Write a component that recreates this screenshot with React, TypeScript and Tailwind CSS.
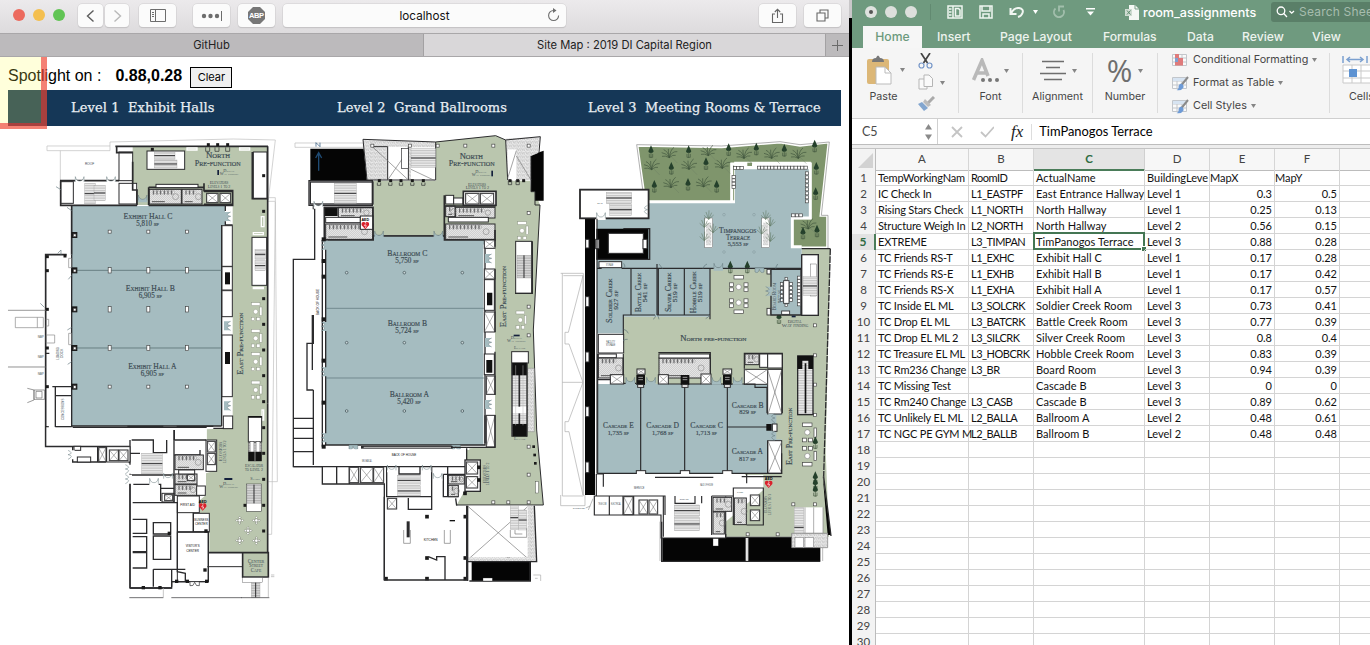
import React from "react";

const BLUE = "#a5bcc0";
const GREEN = "#bac6ae";
const INK = "#2b2b2d";

type Pt = [number, number];
type Box = [number, number, number, number];

/* ---------- floor plan primitives ---------- */

function Label({ x, y, s = 20, w, children, r, sans, fill = "#3b4a52" }: { x: number; y: number; s?: number; w?: number; children: string; r?: boolean; sans?: boolean; fill?: string }) {
  return (
    <text
      x={x}
      y={y}
      fontSize={sans ? s : s * 1.14}
      fill={fill}
      textAnchor="middle"
      textLength={w}
      lengthAdjust="spacingAndGlyphs"
      transform={r ? `rotate(-90 ${x} ${y})` : undefined}
      stroke={fill}
      strokeWidth={s > 14 ? 0.5 : 0}
      className={sans ? "font-['Liberation_Sans']" : "font-['Liberation_Serif'] [font-variant:small-caps]"}
    >
      {children}
    </text>
  );
}

const Wall = ({ d, w = 4, c = INK }: { d: string; w?: number; c?: string }) => <path d={d} fill="none" stroke={c} strokeWidth={w} />;
const Thin = ({ d, c = "#9a9a9a", w = 2 }: { d: string; c?: string; w?: number }) => <path d={d} fill="none" stroke={c} strokeWidth={w} />;

function Rects({ list, fill = "#fff", stroke = INK, w = 3 }: { list: Box[]; fill?: string; stroke?: string; w?: number }) {
  return (
    <>
      {list.map(([x, y, a, b], i) => (
        <rect key={i} x={x} y={y} width={a} height={b} fill={fill} stroke={stroke} strokeWidth={w} />
      ))}
    </>
  );
}

function Shafts({ list }: { list: Box[] }) {
  return (
    <>
      {list.map(([x, y, w, h], i) => (
        <g key={i}>
          <rect x={x} y={y} width={w} height={h} fill="#fff" stroke={INK} strokeWidth={3} />
          <path d={`M${x} ${y}l${w} ${h}M${x + w} ${y}l${-w} ${h}`} stroke="#666" strokeWidth={1.5} />
        </g>
      ))}
    </>
  );
}

function Posts({ pts, w = 9, h = 9 }: { pts: Pt[]; w?: number; h?: number }) {
  return (
    <>
      {pts.map(([x, y], i) => (
        <rect key={i} x={x - w / 2} y={y - h / 2} width={w} height={h} fill="#fff" stroke="#444" strokeWidth={2} />
      ))}
    </>
  );
}

function Blocks({ pts, s = 11 }: { pts: Pt[]; s?: number }) {
  return (
    <>
      {pts.map(([x, y], i) => (
        <rect key={i} x={x - s / 2} y={y - s / 2} width={s} height={s} fill="#1a1a1a" />
      ))}
    </>
  );
}

function DoorsV({ pts, fill = BLUE, k = 1 }: { pts: Pt[]; fill?: string; k?: number }) {
  return (
    <>
      {pts.map(([x, y], i) => (
        <g key={i} transform={`translate(${x} ${y}) scale(${k} 1)`}>
          <path d="M-12 -14L-12 13L8 13Q0 10 -2 4Q-2 1 8 -1Q-2 -3 -2 -6Q0 -11 8 -14Z" fill={fill} />
          <path d="M8 -14Q0 -11 -2 -6Q-2 -3 8 -1Q-2 1 -2 4Q0 10 8 13" fill="none" stroke="#64777c" strokeWidth={1.5} />
        </g>
      ))}
    </>
  );
}

function DoorsH({ pts, fill = BLUE }: { pts: Pt[]; fill?: string }) {
  return (
    <>
      {pts.map(([x, y], i) => (
        <g key={i}>
          <path d={`M${x - 14} ${y + 12}v-22q3 13 14 13q11 0 14-13v22z`} fill={fill} />
          <path d={`M${x - 13} ${y + 6}v-16q3 13 13 13q10 0 13-13v16`} fill="none" stroke="#64777c" strokeWidth={1.5} />
        </g>
      ))}
    </>
  );
}

function Stairs({ list, v }: { list: Box[]; v?: boolean }) {
  return (
    <>
      {list.map(([x, y, w, h], i) => (
        <g key={i}>
          <rect x={x} y={y} width={w} height={h} fill={v ? "url(#treadV)" : "url(#treadH)"} stroke="#999" strokeWidth={1} />
          <path d={v ? `M${x + w / 2} ${y}v${h}` : `M${x} ${y + h / 2}h${w}`} stroke={INK} strokeWidth={3} />
        </g>
      ))}
    </>
  );
}

function Restrooms({ list }: { list: Box[] }) {
  return (
    <>
      {list.map(([x, y, w, h], i) => {
        const n = Math.floor((w * 0.7) / 11);
        return (
          <g key={i}>
            <rect x={x} y={y} width={w} height={h} fill="url(#tile)" stroke={INK} strokeWidth={3} />
            {Array.from({ length: n }, (_, k) => (
              <g key={k}>
                <path d={`M${x + 12 + k * 11} ${y + 3}v13`} stroke={INK} strokeWidth={2.2} />
                <ellipse cx={x + 17.5 + k * 11} cy={y + 9} rx={2.6} ry={4.5} fill="#fff" stroke="#555" strokeWidth={1} />
              </g>
            ))}
            <path d={`M${x + 8} ${y + h - 7}h${w * 0.4}`} stroke="#555" strokeWidth={3} />
            <circle cx={x + w * 0.82} cy={y + h * 0.5} r={Math.min(9, h * 0.25)} fill="none" stroke="#777" strokeWidth={1.5} />
          </g>
        );
      })}
    </>
  );
}

function Lounges({ pts }: { pts: Pt[] }) {
  return (
    <>
      {pts.map(([x, y], i) => (
        <g key={i} fill="#fff" stroke="#8f9686" strokeWidth={1.5}>
          <rect x={x - 13} y={y - 27} width={26} height={9} />
          <rect x={x - 13} y={y + 17} width={10} height={10} />
          <rect x={x + 3} y={y + 17} width={10} height={10} />
          <circle cx={x} cy={y} r={7} />
          <rect x={x + 12} y={y - 14} width={7} height={26} />
        </g>
      ))}
    </>
  );
}

function Aed({ x, y }: { x: number; y: number }) {
  return (
    <g>
      <text x={x} y={y - 11} fontSize={11} fontWeight={700} textAnchor="middle" className="font-['Liberation_Sans']">AED</text>
      <path d={`M${x} ${y + 13}l-11-12q-2-10 6-10q4 0 5 4q1-4 5-4q8 0 6 10z`} fill="#d9202b" />
      <path d={`M${x + 2} ${y - 5}l-5 7h6l-3 7`} fill="none" stroke="#fff" strokeWidth={2} />
    </g>
  );
}

function Trees({ pts }: { pts: Pt[] }) {
  return (
    <>
      {pts.map(([x, y], i) => (
        <g key={i}>
          <path d={`M${x} ${y - 16}l4 9l4 9q-2 6-8 5q-7 1-8-5l4-9z`} fill="#24402b" />
          <path d={`M${x} ${y + 4}v18m-5-12v10h10v-10`} stroke="#43583f" strokeWidth={2} fill="none" />
        </g>
      ))}
    </>
  );
}

function Palms({ pts }: { pts: Pt[] }) {
  return (
    <>
      {pts.map(([x, y], i) => (
        <g key={i} fill="none" stroke="#3f543d" strokeWidth={2}>
          <path d={`M${x} ${y + 15}q-9-14-23-15M${x} ${y + 15}q-5-20-17-24M${x} ${y + 15}q-4-20-3-26M${x} ${y + 15}q3-24 14-31M${x} ${y + 15}q7-20 24-18M${x} ${y + 15}q-12-7-22-4M${x} ${y + 15}q11-10 19-7`} />
          <path d={`M${x} ${y + 6}l24 25`} stroke="#6b7c62" strokeWidth={1.2} />
        </g>
      ))}
    </>
  );
}

function Grasses({ pts }: { pts: Pt[] }) {
  return (
    <>
      {pts.map(([x, y], i) => (
        <path key={i} d={`M${x} ${y + 12}l-14-12M${x} ${y + 12}l-8-22M${x} ${y + 12}l1-27M${x} ${y + 12}l9-20M${x} ${y + 12}l15-13`} fill="none" stroke="#5f7760" strokeWidth={1.6} />
      ))}
    </>
  );
}

function Wayfinding({ x, y }: { x: number; y: number }) {
  return (
    <g>
      <Label x={x} y={y} s={9} w={34}>Digital</Label>
      <Label x={x} y={y + 9} s={9} w={56}>Way finding</Label>
    </g>
  );
}

/* ---------- levels ---------- */

function LevelOne() {
  return (
    <g transform="translate(0 130) scale(.33333)">
      <Thin d="M141 48H330V62H141zM181 62V152M330 48V36L700 27L826 30L805 210M24 541H137M24 711H137M826 215L832 1055H805M803 203H826V214H803M826 214L815 1213H800" c="#bdbdbd" />
      <path d="M398 50H803V1268H805V1340H730V1268H628V1150H600V1110L618 1095V1030L650 1020V930H620V898L698 895V225H412V160H398Z" fill={GREEN} />
      <path d="M215 228H675V285H665V888H215Z" fill={BLUE} />
      <rect x={137} y={374} width={78} height={575} fill="#fff" />
      <Rects list={[[357, 66, 41, 86], [760, 66, 41, 140], [357, 160, 53, 62], [441, 63, 113, 55], [182, 155, 38, 65], [756, 322, 44, 144]]} />
      <Wall d="M346 49H804M350 49V68H398M803 49V206H757V66M180 152H357M182 152V226H411M398 95V180H411V226M446 226H698V182H612V160M446 172H612M446 172V226M215 228V374M200 374H137V949H388M803 206V820" w={5} />
      <Wall d="M215 374V888H665M676 228V243M676 274V285H698M698 895H640M665 285V888M137 670H148M157 770H215V890H166V770M166 797H215" w={4} />
      <Stairs list={[[463, 66, 62, 22], [463, 90, 68, 24], [254, 160, 32, 62], [282, 166, 34, 46], [765, 358, 31, 30], [765, 392, 31, 30]]} />
      <Restrooms list={[[448, 178, 96, 44], [546, 178, 60, 44]]} />
      <Rects list={[[468, 163, 126, 10]]} />
      <Shafts list={[[620, 190, 34, 28], [660, 190, 32, 28]]} />
      <Wall d="M612 184H698M612 223H698" w={5} />
      <Rects list={[[666, 287, 31, 122], [666, 410, 31, 70], [666, 482, 31, 78], [666, 615, 31, 185], [670, 858, 28, 38]]} />
      <rect x={675} y={427} width={15} height={36} fill="#111" />
      <rect x={675} y={666} width={15} height={36} fill="#111" />
      <Wall d="M218 421H665M218 654H665" w={2} c="#4c6065" />
      <Posts pts={[[329, 305], [445, 305], [561, 305], [329, 770], [445, 770], [561, 770]]} />
      <Posts h={16} pts={[[329, 421], [445, 421], [561, 421], [329, 538], [445, 538], [561, 538], [329, 654], [445, 654], [561, 654]]} />
      <Blocks s={18} pts={[[223, 315], [223, 421], [223, 538], [223, 654], [223, 770]]} />
      <Posts w={8} h={8} pts={[[224, 316], [224, 422], [224, 539], [224, 655], [224, 771]]} />
      <Blocks s={9} pts={[[142, 380], [195, 378], [142, 422], [142, 538], [142, 654], [142, 770], [142, 893], [142, 943], [457, 58], [791, 137], [791, 244], [791, 506], [791, 583], [791, 660], [791, 737], [791, 815], [791, 893], [791, 970], [791, 1048], [791, 1126], [791, 1203], [735, 1126]]} />
      <DoorsV pts={[[684, 260], [684, 588], [684, 828]]} />
      <DoorsH pts={[[428, 205]]} />
      <DoorsH fill="#fff" pts={[[239, 150], [333, 150]]} />
      <Wall d="M205 448l10-12M202 600l13-8M203 703l12-8M201 232l14 10M183 374v-14l-10 10M133 532l-12-12M184 180l-16-10" w={2} c="#667a80" />
      <Blocks s={9} pts={[[625, 44], [653, 44], [683, 44]]} />
      <Wall d="M617 52v12h12v-12M645 52v12h12v-12M677 52v12h12v-12" w={2} />
      <Thin d="M561 54h30v6h-30zM719 54h30v6h-30zM784 260h8v30h-8zM760 308h30v6h-30zM760 472h30v4h-30zM786 840h5v30h-5z" c="#fff" w={4} />
      <rect x={652} y={120} width={5} height={15} fill="#14203c" />
      <Wayfinding x={687} y={126} />
      <Label x={654} y={84} s={21} w={72}>North</Label>
      <Label x={653} y={107} s={21} w={138}>Pre-function</Label>
      <Label x={657} y={163} s={11} w={56}>Elevators</Label>
      <Label x={657} y={174} s={11} w={68}>Levels 1 to 2</Label>
      <Label x={444} y={266} s={22} w={147}>Exhibit Hall C</Label>
      <Label x={443} y={287} s={19} w={68}>5,810 sf</Label>
      <Label x={451} y={484} s={22} w={147}>Exhibit Hall B</Label>
      <Label x={451} y={504} s={19} w={70}>6,905 sf</Label>
      <Label x={457} y={717} s={22} w={145}>Exhibit Hall A</Label>
      <Label x={457} y={737} s={19} w={70}>6,905 sf</Label>
      <Label x={730} y={641} s={20} w={186} r>East Pre-function</Label>
      <Lounges pts={[[767, 545], [767, 625], [767, 695], [767, 780]]} />
      <Label x={269} y={104} s={8} w={28} sans>ROOF</Label>
      {/* loading dock */}
      <Thin d="M46 562H130V593H46zM112 562V593M137 568h9v20h-9M139 615h25v24h-25zM24 541H137M24 711H137M206 385h9v28h-9zM206 610h9v34h-9z" c="#888" />
      <Thin d="M82 775l20 5v30l-20 8M102 780h32v28h-32zM108 784h18v20h-18z" c="#666" />
      <Label x={122} y={624} s={9} w={18} sans>RAMP</Label>
      <Label x={122} y={684} s={9} w={18} sans>RAMP</Label>
      <Label x={122} y={735} s={9} w={18} sans>RAMP</Label>
      <Label x={177} y={670} s={9} w={38} sans r>LOADING</Label>
      <Label x={189} y={670} s={9} w={28} sans r>DOCK</Label>
      <Label x={191} y={838} s={10} w={64} sans r>CONCESSIONS</Label>
      {/* back of house */}
      <path d="M137 892H620V928H390V950H137Z" fill="#fff" />
      <Wall d="M137 890V949H388V1000M166 890H215M218 892H620M382 889H490M530 889H640M218 949V996H318M390 930V1374H515V1355H560M395 930H460V968H500V930M523 930V900M523 930H618M523 975H600M600 960V975M390 970H420M293 950V996M320 950V996" w={4} />
      <Rects list={[[320, 950, 70, 46], [222, 949, 20, 12], [232, 981, 40, 15]]} />
      <Shafts list={[[296, 953, 22, 42], [328, 960, 27, 32], [357, 960, 27, 32]]} />
      <Stairs list={[[425, 970, 62, 62]]} />
      <Restrooms list={[[525, 975, 85, 44], [525, 1032, 66, 30], [525, 1064, 66, 32]]} />
      <Rects list={[[618, 930, 32, 94], [486, 1090, 36, 26], [590, 1068, 26, 28], [536, 1020, 48, 12]]} />
      <Shafts list={[[622, 934, 24, 32], [622, 970, 24, 34], [562, 1034, 22, 18], [494, 1094, 24, 18]]} />
      <Rects list={[[532, 1098, 66, 50], [580, 1150, 48, 56], [532, 1206, 93, 149]]} />
      <Wall d="M390 1035H520M390 1048V1374M400 1063H482V1113M482 1075H522M522 900V1116M398 1118H532V1200M532 1150V1325L556 1330V1355H625V1206H532M580 1148V1206M398 1168H440V1210H398M398 1220H440V1265H398M398 1268H440V1314H398M460 1178H512V1212H460ZM460 1218H512V1288H460ZM460 1318V1370M460 1318H515V1370M515 1318H556M390 1374H515M515 1355H556" w={4} />
      <path d="M584 1202h36" stroke="#fff" strokeWidth={0} />
      <Blocks s={10} pts={[[618, 1203], [508, 1210], [615, 1320], [530, 1354], [562, 1354], [620, 1354], [430, 1373], [480, 1373]]} />
      <Label x={563} y={1128} s={10} w={44} sans fill="#111">FIRST AID</Label>
      <Label x={604} y={1172} s={10} w={42} sans fill="#111">BUSINESS</Label>
      <Label x={604} y={1185} s={10} w={38} sans fill="#111">CENTER</Label>
      <Label x={578} y={1252} s={10} w={42} sans fill="#111">VISITOR'S</Label>
      <Label x={578} y={1265} s={10} w={38} sans fill="#111">CENTER</Label>
      <Aed x={608} y={1129} />
      <DoorsV fill="#fff" pts={[[384, 1018], [384, 1048], [212, 975]]} k={-1} />
      <DoorsH fill="#fff" pts={[[504, 1040], [462, 1055]]} />
      <path d="M570 1355v12q10 4 14-10q4 14 14 10v-12z" fill="#fff" stroke={INK} strokeWidth={2} />
      <Rects list={[[745, 860, 40, 76]]} />
      <rect x={745} y={938} width={40} height={55} fill="url(#treadH)" stroke="#555" strokeWidth={2} />
      <Rects list={[[750, 935, 12, 50], [768, 935, 12, 50], [740, 1062, 44, 82]]} w={1.5} />
      <path d="M745 965h40v28h-40zM745 858h40v5h-40z" fill="#111" />
      <path d="M765 938v55" stroke="#ccc" strokeWidth={2} />
      <Stairs v list={[[741, 1064, 42, 56]]} />
      <Label x={762} y={1012} s={11} w={54}>Escalator</Label>
      <Label x={762} y={1023} s={11} w={54}>to Level 2</Label>
      <Label x={765} y={1050} s={9} w={28}>Stairs</Label>
      <Label x={666} y={965} s={11} w={58} r>Elevators</Label>
      <Label x={677} y={965} s={11} w={68} r>Levels 1 to 2</Label>
      <rect x={673} y={1044} width={24} height={6} fill="#14203c" />
      <Wayfinding x={686} y={1064} />
      {([[719, 1171], [769, 1171], [744, 1202], [719, 1232], [769, 1232]] as Pt[]).map(([x, y]) => (
        <g key={`${x}-${y}`} fill="#fff" stroke="#6f766a" strokeWidth={1.5}>
          <path d={`M${x} ${y - 12}l4 4l-4 4l-4-4zM${x} ${y + 12}l4-4l-4-4l-4 4zM${x - 12} ${y}l4-4l4 4l-4 4zM${x + 12} ${y}l-4-4l-4 4l4 4z`} />
          <circle cx={x} cy={y} r={5} />
        </g>
      ))}
      <path d="M803 820V1268M728 1268H805V1341H728ZM625 1268H728" fill="none" stroke={INK} strokeWidth={5} />
      <path d="M622 1310H728" stroke={INK} strokeWidth={3} />
      <Rects list={[[728, 1343, 60, 14]]} w={1} />
      <Stairs v list={[[754, 1358, 26, 44]]} />
      <Wall d="M388 1403H490M514 1403H726M724 1403H808" w={2} />
      <Thin d="M805 1343V1401M490 1374V1403M813 1335h10M813 1340h10" c="#aaa" />
      <Label x={768} y={1298} s={14} w={50}>Center</Label>
      <Label x={768} y={1312} s={14} w={42}>Street</Label>
      <Label x={768} y={1326} s={14} w={32}>Cafe</Label>
    </g>
  );
}

function LevelTwo() {
  return (
    <g transform="translate(285 130) scale(.33333)">
      <Thin d="M30 39H235V52H30z" c="#bbb" />
      <path d="M452 35L632 17L662 30L668 152H735L738 185H750L765 225L745 600L755 905L775 1125H515L540 1080V960H553V955L630 950V330L478 325V315H265V152H452Z" fill={GREEN} />
      <path d="M76 56H236L246 152H76ZM738 75L776 62V212H750V185H738ZM560 1296H738V1353H560Z" fill="#050505" />
      <path d="M234 28L452 36V150H246Z" fill="url(#speckle)" />
      <path d="M308 50H370V150H308ZM378 52H452V150H378Z" fill="#fff" />
      <path d="M662 26L766 20L758 70L738 78V150H668Z" fill="url(#speckle)" />
      <path d="M668 58H694V150H668Z" fill="#fff" />
      <Wall d="M234 28L452 36L632 17L662 30L766 20L762 68M662 30L668 150M234 28L246 150H452V36M262 50H308V150M370 50V150M738 78V185H750V225H765L745 600L755 900L775 1125H515" w={3} />
      <Thin d="M262 50L370 150M308 150L370 60M378 118L450 152M694 78L738 150M668 145L694 62" c="#777" />
      <Stairs list={[[378, 56, 74, 56]]} />
      <Rects list={[[350, 56, 20, 60]]} w={2} />
      <Blocks pts={[[283, 152], [317, 152], [348, 152], [382, 152], [415, 152], [675, 152], [698, 152], [716, 152]]} s={9} />
      <Wall d="M277 158v8h10v-8M311 158v8h10v-8M343 158v8h10v-8M377 158v8h10v-8M410 158v8h10v-8M670 150v14h10v-14M693 150v14h10v-14" w={2} />
      <path d="M101 122V72M92 84L101 68L110 84" fill="none" stroke="#1f4b74" strokeWidth={4} />
      <path d="M93 50V38L105 50V38" fill="none" stroke="#1f4b74" strokeWidth={2} />
      <Posts pts={[[262, 47], [375, 47], [458, 47], [541, 47], [625, 47], [731, 47], [731, 249], [731, 530], [731, 616], [731, 950], [731, 1034], [731, 1117], [625, 1117], [670, 1117], [731, 835]]} />
      <Rects list={[[76, 156, 188, 66]]} w={4} />
      <Stairs list={[[148, 160, 66, 60]]} />
      <Wall d="M72 152H262V226H72ZM89 225V388H25V1010H112M85 238V225" w={4} />
      <rect x={119} y={232} width={145} height={96} fill="#fff" />
      <rect x={120} y={234} width={38} height={24} fill="#111" />
      <Restrooms list={[[160, 232, 103, 32], [122, 282, 142, 46], [482, 282, 148, 46], [512, 232, 118, 32], [482, 228, 28, 32]]} />
      <Rects list={[[122, 262, 104, 16], [490, 262, 120, 14], [226, 258, 38, 40], [482, 196, 24, 26], [506, 204, 28, 18]]} />
      <Wall d="M118 232H264V330H118ZM478 196V330H630V300M265 318H478M478 228H632" w={5} />
      <Aed x={241} y={285} />
      <Rects list={[[535, 184, 98, 42]]} w={5} />
      <Shafts list={[[542, 190, 40, 32], [586, 190, 40, 32]]} />
      <path d="M122 330H265V318H478V330H605L595 345V945H122Z" fill={BLUE} />
      <path d="M112 330V950M120 330H265V318H478V330H600V945H122V330" fill="none" stroke={INK} strokeWidth={4} />
      <DoorsV pts={[[612, 386], [612, 638], [612, 824]]} />
      <DoorsV k={-1} pts={[[117, 346], [117, 590], [117, 726], [117, 924]]} />
      <DoorsH pts={[[282, 313], [460, 313]]} />
      <path d="M192 945v12q10 6 12-8q4 14 14 8v-12zM500 945v12q10 6 12-8q4 14 14 8v-12z" fill={BLUE} stroke="#64777c" strokeWidth={1.5} />
      <Wall d="M122 535H600M122 744H600" w={1.8} c="#536970" />
      {([[185, 428], [358, 428], [532, 428], [185, 638], [358, 638], [532, 638], [185, 843], [358, 843], [532, 843]] as Pt[]).map(([x, y]) => (
        <circle key={`${x}-${y}`} cx={x} cy={y} r={4} fill="#c8d5d7" stroke="#3b4b50" strokeWidth={2} />
      ))}
      <Blocks s={12} pts={[[116, 328], [116, 393], [116, 440], [116, 568], [116, 692], [116, 818], [116, 950]]} />
      <Shafts list={[[598, 330, 32, 25], [598, 417, 32, 30], [598, 546, 32, 60], [604, 738, 26, 55], [604, 856, 26, 95]]} />
      <Rects list={[[598, 449, 30, 92], [598, 672, 30, 62]]} />
      <path d="M606 488h16v38h-16zM604 690h18v38h-18z" fill="#111" />
      <Wall d="M630 330V350M630 418V606M630 665V795M630 855V952H230M600 856V940" w={4} />
      {/* escalators and stairs along the east side */}
      <Rects list={[[692, 334, 48, 156], [680, 665, 50, 34]]} />
      <Stairs v list={[[696, 376, 42, 68]]} />
      <rect x={680} y={700} width={46} height={218} fill="url(#treadH)" />
      <path d="M703 700v218" stroke={INK} strokeWidth={5} />
      <path d="M680 698h46v38h-46zM682 882h44v38h-44z" fill="#111" />
      <path d="M680 830h46v20h-46z" fill="#fff" />
      <path d="M692 706v180M714 706v180" stroke="#bbb" strokeWidth={1.5} />
      <path d="M728 715H748V905H728Z" fill="url(#speckle)" stroke="#666" strokeWidth={1} />
      <Wall d="M690 490H742V334M681 700V920M726 700V920" w={4} />
      <Lounges pts={[[711, 302], [706, 570]]} />
      <rect x={619} y={122} width={5} height={17} fill="#14203c" />
      <Wayfinding x={588} y={128} />
      <rect x={686} y={614} width={18} height={5} fill="#14203c" />
      <Wayfinding x={694} y={628} />
      <Label x={704} y={657} s={9} w={34}>Escalator</Label>
      <Label x={704} y={931} s={9} w={34}>Escalator</Label>
      <Label x={559} y={88} s={21} w={70}>North</Label>
      <Label x={560} y={109} s={21} w={138}>Pre-function</Label>
      <Label x={576} y={167} s={11} w={54}>Elevators</Label>
      <Label x={577} y={178} s={11} w={70}>Levels 1 to 2</Label>
      <Label x={367} y={379} s={22} w={120}>Ballroom C</Label>
      <Label x={366} y={400} s={19} w={70}>5,750 sf</Label>
      <Label x={367} y={588} s={22} w={118}>Ballroom B</Label>
      <Label x={366} y={609} s={19} w={70}>5,724 sf</Label>
      <Label x={373} y={802} s={22} w={118}>Ballroom A</Label>
      <Label x={372} y={823} s={19} w={70}>5,420 sf</Label>
      <Label x={664} y={500} s={20} w={184} r>East Pre-function</Label>
      <Label x={103} y={516} s={11} w={78} sans r fill="#111">BACK OF HOUSE</Label>
      {/* back of house */}
      <path d="M27 958H545V1010H27Z" fill="#fff" />
      <Wall d="M85 555V640H66V780H85M82 555V720M85 780V865M25 865H85V1005M25 895H85M25 925H85M25 965H85M25 1010H540M228 950H500M545 955V1000M112 1010V1062H298V1350M155 1010V1062M193 1010V1062M305 1010V1100H440V1010M342 1010V1032H405V1010M370 1104V1138H440V1100M475 1033V1100H520M475 1033H540M488 1010V1100" w={4} />
      <rect x={228} y={948} width={275} height={8} fill={INK} />
      <Thin d="M236 952H498" c="#c9c9c9" w={3} />
      <Shafts list={[[193, 1012, 28, 46], [226, 1012, 38, 46], [266, 1012, 30, 46], [307, 1105, 28, 32]]} />
      <Stairs list={[[338, 1036, 68, 30], [338, 1068, 68, 30]]} />
      <Rects list={[[540, 990, 46, 94]]} w={4} />
      <Shafts list={[[544, 996, 34, 36], [544, 1040, 34, 34]]} />
      <Restrooms list={[[490, 1036, 48, 26], [490, 1066, 30, 34]]} />
      <Blocks pts={[[426, 1160], [541, 1160], [426, 1284], [541, 1284], [426, 1346], [541, 1346], [303, 1346], [670, 1285], [582, 1012], [582, 1050], [540, 1090]]} />
      <DoorsH fill="#fff" pts={[[320, 1015], [425, 1015], [458, 1040], [100, 224]]} />
      <Thin d="M356 1200V1240H376V1200M478 1200V1240H496V1200" c="#777" />
      <rect x={365} y={1174} width={9} height={48} fill={INK} />
      <rect x={494} y={1170} width={16} height={4} fill="#111" />
      <path d="M548 1127H728V1282H548Z" fill="#fff" />
      <Thin d="M550 1130L728 1285M728 1130L553 1285" c="#777" />
      <path d="M550 1282H755V1295H550ZM728 1127H748L755 1295H728Z" fill="url(#speckle)" />
      <Wall d="M298 1100V1350H545M548 1127V1353M430 1280L455 1290V1280H480V1350M550 1295H755L748 1127M735 1295V1353M553 1353H738M298 1350H545V1127M515 1127L512 1105" w={4} />
      <Thin d="M745 1335h22v18M750 1345h8" c="#aaa" />
      <Rects list={[[594, 1344, 28, 9], [752, 1055, 8, 34]]} w={1} />
      <Stairs list={[[676, 1127, 24, 72], [701, 1140, 24, 60]]} />
      <Thin d="M676 1200V1222H725V1195M690 1200V1212H712" c="#777" />
      <Blocks s={8} pts={[[746, 950], [749, 975], [751, 1000]]} />
      <Label x={357} y={977} s={12} w={74} sans fill="#111">BACK OF HOUSE</Label>
      <Label x={437} y={1232} s={11} w={42} sans fill="#111">KITCHEN</Label>
      <Label x={246} y={996} s={8} w={30} sans>MECHANICAL</Label>
      <Label x={602} y={1032} s={11} w={54} r>Elevators</Label>
      <Label x={612} y={1032} s={10} w={68} r>Levels 1 to 2</Label>
    </g>
  );
}

function LevelThree() {
  return (
    <g transform="translate(555 130) scale(.33333)">
      <path d="M465 415H740V356H826L812 960L822 1220H512V1175L625 1080V1035H560V975H680V780H205V560H465Z" fill={GREEN} />
      <path d="M248 48L500 52L675 38L735 48L820 38L796 258L816 258V352H710V265H765V98H540V218H272Z" fill="#7f956c" stroke="#fff" strokeWidth={5} />
      <path d="M268 215L245 44L500 48L675 35L735 44L823 36L799 256H819V356" fill="none" stroke="#888" strokeWidth={2} />
      <path d="M282 218H540V118H762V265H710V350H740V418H465V560H205V610H126V266H282Z" fill={BLUE} />
      <path d="M530 215V102H766V264H712V350H740M282 215H540" fill="none" stroke="#fff" strokeWidth={9} />
      <Posts w={10} h={9} pts={[[540, 114], [550, 114], [560, 114], [612, 113], [622, 113], [632, 113], [642, 113], [652, 113], [662, 113], [672, 113], [682, 113], [692, 113], [702, 113], [712, 113], [722, 113], [732, 113], [742, 113], [752, 113], [536, 141], [536, 151], [536, 161], [536, 171], [756, 130], [756, 142], [756, 154], [756, 166], [756, 178], [756, 190], [756, 202], [756, 214], [715, 256], [726, 256], [737, 256]]} />
      <rect x={577} y={98} width={14} height={10} fill="#7f956c" />
      <Trees pts={[[288, 62], [401, 62], [521, 56], [604, 54], [688, 58], [779, 45], [349, 112], [453, 98], [298, 166], [399, 160], [485, 166], [784, 112], [782, 188], [744, 306], [786, 300], [526, 408], [577, 408], [672, 560]]} />
      <Palms pts={[[343, 68], [460, 62], [567, 70], [650, 70], [730, 70], [290, 104], [402, 103], [502, 100], [348, 158], [446, 156], [760, 282]]} />
      <g>
        <Rects list={[[449, 264, 24, 89], [620, 264, 24, 89]]} w={1.5} stroke="#666" />
        <path d="M453 278h16v68h-16zM624 278h16v68h-16z" fill="url(#speckle)" />
        <Grasses pts={[[461, 256], [632, 256], [448, 280], [474, 296], [448, 320], [646, 276], [620, 300], [646, 322]]} />
      </g>
      <path d="M90 265H120V1095H90ZM124 296H280V388H124ZM322 1224H572V1293H322ZM580 1224H796V1293H580ZM803 1035L828 1215H818Z" fill="#050505" />
      <Rects list={[[160, 310, 105, 60], [92, 328, 10, 26], [122, 328, 10, 28], [264, 328, 12, 28], [92, 500, 10, 30], [92, 666, 10, 30], [92, 830, 10, 30], [92, 996, 10, 32], [75, 179, 205, 86]]} />
      <Wall d="M75 179H281V265H75Z" w={5} />
      <Stairs list={[[154, 187, 76, 34], [164, 222, 66, 34]]} />
      <Label x={135} y={221} s={7} w={16} sans>STAIR</Label>
      <Wall d="M205 296H284V388H124" w={4} />
      <DoorsH fill="#fff" pts={[[138, 258]]} />
      <DoorsV fill="#fff" pts={[[270, 240]]} />
      <Thin d="M17 430H85V1098H22V430M25 437L84 437L40 607H30V642H42L84 757L40 875H30V905H42L84 1095M84 437V1095M17 1095V1127H90V1095M22 757H84" c="#aaa" />
      {/* creek rooms */}
      <Wall d="M126 266V1030M126 415H140M200 415H740M228 415V555H205V640M310 415V555M306 555H465M388 415V555M465 415V568M306 402V555M228 555H300" w={3.5} />
      <Rects list={[[132, 395, 68, 18], [130, 613, 76, 56]]} />
      <Label x={164} y={408} s={8} w={22} sans>STORAGE</Label>
      <Label x={167} y={640} s={8} w={26} sans>FACILITY</Label>
      <Label x={167} y={648} s={8} w={28} sans>STORAGE</Label>
      <DoorsH pts={[[490, 410]]} />
      <path d="M600 414v12q10 6 13-8q4 14 14 8v-12z" fill={BLUE} stroke="#64777c" strokeWidth={1.5} />
      <Wall d="M206 400q8 10 0 14M312 402q8 10 10 14M456 402q-10 4-12 14M294 568q8-4 8-12M312 568q-2-8-4-12M452 566q8-4 12-10M206 598q10 2 14 12M204 632q10-6 14-4M668 402q-6 8-6 16" w={2} c="#5f7479" />
      {([[507, 254], [597, 254], [507, 366], [597, 366]] as Pt[]).map(([x, y]) => (
        <circle key={`${x}-${y}`} cx={x} cy={y} r={4} fill="none" stroke="#8ba0a4" strokeWidth={2} />
      ))}
      <Posts w={28} h={10} pts={[[551, 442], [551, 545]]} />
      <Posts w={12} h={11} pts={[[530, 464], [573, 464], [530, 479], [573, 479], [530, 512], [573, 512], [530, 527], [573, 527]]} />
      <circle cx={551} cy={471} r={8} fill="#fff" stroke="#666" strokeWidth={1.5} />
      <circle cx={551} cy={518} r={8} fill="#fff" stroke="#666" strokeWidth={1.5} />
      {/* board room */}
      <path d="M648 418H738V555H648Z" fill={BLUE} stroke={INK} strokeWidth={4} />
      <Rects list={[[686, 452, 16, 68], [636, 418, 10, 14], [636, 535, 10, 20], [680, 543, 24, 10], [740, 374, 50, 182]]} w={2.5} />
      <Posts w={8} h={8} pts={[[680, 462], [680, 474], [680, 486], [680, 498], [680, 510], [708, 462], [708, 474], [708, 486], [708, 498], [708, 510], [694, 446], [694, 526]]} />
      <Posts w={9} h={9} pts={[[732, 443], [732, 453], [732, 463], [732, 473], [732, 483], [732, 493], [732, 503], [732, 513], [732, 523]]} />
      <DoorsV pts={[[640, 484]]} k={-1} />
      <Rects list={[[766, 402, 18, 96]]} w={1} />
      <Stairs list={[[744, 440, 42, 56]]} />
      <Wall d="M740 356H826M740 374V556H790V374H740" w={4} />
      <path d="M826 356L806 1040" stroke={INK} strokeWidth={4} strokeDasharray="20 3" />
      <Posts pts={[[780, 586], [780, 676], [780, 764], [780, 855], [715, 1123], [780, 1123], [578, 1213], [668, 1213]]} />
      <rect x={710} y={557} width={12} height={5} fill="#14203c" />
      <Label x={719} y={578} s={12} w={42}>Digital</Label>
      <Label x={720} y={591} s={12} w={80}>Way finding</Label>
      <Label x={548} y={309} s={21} w={112}>Timpanogos</Label>
      <Label x={549} y={329} s={21} w={72}>Terrace</Label>
      <Label x={549} y={348} s={18} w={62}>5,553 sf</Label>
      <Label x={172} y={512} s={20} w={134} r>Soldier Creek</Label>
      <Label x={190} y={510} s={17} w={58} r>927 sf</Label>
      <Label x={257} y={487} s={20} w={118} r>Battle Creek</Label>
      <Label x={276} y={488} s={17} w={58} r>541 sf</Label>
      <Label x={348} y={487} s={20} w={118} r>Silver Creek</Label>
      <Label x={367} y={488} s={17} w={58} r>519 sf</Label>
      <Label x={422} y={487} s={20} w={126} r>Hobble Creek</Label>
      <Label x={440} y={488} s={17} w={58} r>519 sf</Label>
      <Label x={663} y={500} s={14} w={82} r>Board Room</Label>
      <Label x={679} y={500} s={13} w={40} r>967 sf</Label>
      <Label x={475} y={634} s={20} w={198}>North pre-function</Label>
      {/* service core */}
      <path d="M128 762H680V940L640 1030H128Z" fill={BLUE} />
      <Restrooms list={[[130, 684, 74, 60], [312, 684, 154, 60], [570, 672, 42, 32]]} />
      <Rects list={[[312, 672, 152, 12], [614, 672, 24, 40], [638, 672, 44, 42], [130, 672, 54, 11]]} />
      <Rects list={[[568, 718, 112, 45], [638, 718, 42, 134], [638, 932, 42, 98]]} />
      <path d="M638 856H682V928H638Z" fill={BLUE} />
      <path d="M664 856H684V928H664Z" fill={GREEN} />
      <Thin d="M568 718L638 763M638 718L572 763M638 720L680 850M680 720L640 850M640 935L680 1030M680 935L640 1030" c="#777" />
      <Shafts list={[[166, 734, 40, 28], [310, 734, 30, 28], [438, 732, 30, 30], [246, 717, 24, 16], [504, 717, 26, 16]]} />
      <Wall d="M128 672V1030H680V970M128 749H166M206 760H244M340 762H438M468 762H504M530 762H600V772H636V850M257 770V1030M389 770V1030M517 762V1030M517 891H640M638 932V1030M205 672V735M310 668H466V730M568 716V670H682V850" w={3.5} />
      <path d="M244 735h26v30h-26zM377 735h26v30h-26zM504 735h26v30h-26zM634 882h16v20h-16z" fill="#111" />
      <path d="M250 742h14M250 749h14M383 742h14M383 749h14M510 742h14M510 749h14" stroke="#ddd" strokeWidth={2} />
      <Rects list={[[248, 764, 18, 8], [381, 764, 18, 8], [508, 764, 18, 8], [652, 882, 14, 22], [244, 1022, 28, 14], [376, 1022, 28, 14], [503, 1022, 28, 14]]} />
      <DoorsH fill={BLUE} pts={[[226, 752], [288, 752], [484, 752], [548, 752]]} />
      <DoorsV pts={[[652, 865], [652, 918]]} />
      <Label x={190} y={895} s={20} w={92}>Cascade E</Label>
      <Label x={190} y={914} s={18} w={64}>1,735 sf</Label>
      <Label x={323} y={895} s={20} w={98}>Cascade D</Label>
      <Label x={323} y={914} s={18} w={64}>1,768 sf</Label>
      <Label x={455} y={895} s={20} w={98}>Cascade C</Label>
      <Label x={454} y={914} s={18} w={64}>1,713 sf</Label>
      <Label x={578} y={833} s={20} w={96}>Cascade B</Label>
      <Label x={578} y={852} s={18} w={50}>829 sf</Label>
      <Label x={577} y={973} s={20} w={94}>Cascade A</Label>
      <Label x={577} y={992} s={18} w={50}>817 sf</Label>
      <Label x={711} y={919} s={20} w={172} r>East Pre-function</Label>
      <rect x={728} y={678} width={46} height={176} fill="url(#treadH)" stroke={INK} strokeWidth={4} />
      <path d="M728 677h46v40h-14v-25h-18v25h-14zM749 700h5v150h-5z" fill="#111" />
      <Posts w={28} h={10} pts={[[757, 884], [757, 1003]]} />
      <Posts w={8} h={28} pts={[[781, 908], [781, 978]]} />
      <Posts w={12} h={11} pts={[[749, 930], [766, 930], [749, 955], [766, 955]]} />
      <circle cx={757} cy={907} r={8} fill="#fff" stroke="#666" strokeWidth={1.5} />
      <circle cx={757} cy={978} r={8} fill="#fff" stroke="#666" strokeWidth={1.5} />
      {/* back of house */}
      <path d="M124 1032H570V1075H524V1095H512V1224H322V1155H118V1098H124Z" fill="#fff" />
      <Wall d="M124 1032V1098H118V1155H318V1224H512V1100M124 1032H145V1070M124 1098H330V1155M163 1098V1155M204 1098V1155M236 1098V1155M300 1042H475M325 1098V1220M360 1098V1120H420V1098M440 1098V1120M470 1098V1215M470 1098H535V1074H625V1185H575M535 1098V1185M575 1030V1060M680 1040H560" w={3.5} />
      <Shafts list={[[206, 1100, 28, 54], [252, 1110, 26, 42], [282, 1110, 26, 42], [586, 1095, 28, 32], [586, 1140, 28, 32]]} />
      <Stairs list={[[358, 1125, 76, 34], [358, 1162, 76, 40]]} />
      <Restrooms list={[[474, 1102, 56, 42], [474, 1146, 34, 66], [538, 1104, 36, 80]]} />
      <Label x={252} y={1077} s={8} w={32} sans>SERVICE</Label>
      <Label x={455} y={1069} s={8} w={38} sans>BACK OF HOUSE</Label>
      <Label x={142} y={1124} s={8} w={24} sans>TELECOM</Label>
      <Label x={183} y={1124} s={8} w={30} sans>ELECTRICAL</Label>
      <Label x={387} y={1110} s={7} w={26} sans>STORAGE</Label>
      <Label x={555} y={1090} s={7} w={18} sans>CATER</Label>
      <Label x={71} y={1137} s={7} w={36} sans>CHUTE PIPE</Label>
      <Thin d="M92 1134l14-6M100 1140l14-34" c="#999" />
      <Aed x={641} y={1061} />
      <Label x={636} y={1124} s={11} w={52} r>Elevators</Label>
      <Label x={647} y={1124} s={10} w={64} r>Levels 1 to 3</Label>
      <Trees pts={[[781, 935], [781, 1040], [781, 1058], [781, 1078]]} />
      <path d="M718 1132H804V1210H718Z" fill="#fff" />
      <Stairs list={[[718, 1132, 28, 120]]} />
      <Thin d="M750 1132V1210M776 1132V1210M804 1132V1210M746 1210H804" c="#888" />
      <path d="M710 1210H818V1253H710Z" fill="url(#speckle)" stroke="#777" strokeWidth={2} />
      <Rects list={[[720, 1222, 26, 30], [750, 1222, 26, 30], [474, 1226, 16, 22]]} w={1} />
      <Wall d="M320 1175V1294H796M512 1212V1222H710M806 1040L828 1218" w={4} />
      <path d="M574 1224h5v68h-5z" fill="#ddd" />
      <Thin d="M315 1175V1293M803 1253V1293" c="#999" />
    </g>
  );
}

function FloorPlans() {
  return (
    <svg viewBox="0 126 849 519" className="block h-[519px] w-[849px]">
      <defs>
        <pattern id="treadH" width="8" height="5" patternUnits="userSpaceOnUse"><rect width="8" height="5" fill="#eee" /><path d="M0 1H8" stroke="#999" strokeWidth="1.5" /></pattern>
        <pattern id="treadV" width="5" height="5" patternUnits="userSpaceOnUse"><rect width="5" height="5" fill="#ddd" /><path d="M0 1H5" stroke="#888" strokeWidth="1.5" /></pattern>
        <pattern id="tile" width="6" height="6" patternUnits="userSpaceOnUse"><rect width="6" height="6" fill="#e4e4e4" /><path d="M0 0L6 6" stroke="#a8a8a8" strokeWidth="1" /></pattern>
        <pattern id="speckle" width="13" height="11" patternUnits="userSpaceOnUse"><rect width="13" height="11" fill="#e9e9e9" /><path d="M1 2l3 1M8 1l1 3M4 7l2 2M10 8l2-2M11 3l1 1" stroke="#666" strokeWidth="1.5" /></pattern>
      </defs>
      <LevelOne />
      <LevelTwo />
      <LevelThree />
    </svg>
  );
}

/* ---------- browser window ---------- */

const toolBtn = "flex h-[23px] items-center justify-center rounded-[4px] bg-[#fbfbfb] shadow-[0_0_0_0.5px_#cfcdcf,0_1px_1px_#b9b7b9] text-[#6b6b6b]";

function Browser() {
  return (
    <section className="relative flex h-full w-[849px] shrink-0 flex-col overflow-hidden bg-white">
      <header className="flex h-[33px] shrink-0 items-start bg-linear-to-b from-[#eceaec] to-[#dddbdd] pt-[4px] font-[Inter]">
        <div className="ml-[13px] mt-[5px] flex gap-[8px]">
          <i className="size-[12px] rounded-full bg-[#ec6a5e]" />
          <i className="size-[12px] rounded-full bg-[#f4bf4f]" />
          <i className="size-[12px] rounded-full bg-[#61c454]" />
        </div>
        <div className={`${toolBtn} ml-[13px] w-[25px]`}>
          <svg width="9" height="14" viewBox="0 0 9 14" fill="none" stroke="#5d5d5d" strokeWidth="1.4"><path d="M7.500 1.500L1.500 7L7.500 12.500" /></svg>
        </div>
        <div className={`${toolBtn} ml-[2px] w-[24px]`}>
          <svg width="9" height="14" viewBox="0 0 9 14" fill="none" stroke="#b9b9b9" strokeWidth="1.4"><path d="M1.500 1.500L7.500 7L1.500 12.500" /></svg>
        </div>
        <div className={`${toolBtn} ml-[10px] w-[37px]`}>
          <svg width="16" height="13" viewBox="0 0 16 13" fill="none" stroke="#6d6d6d"><path d="M.5.5h15v12H.5zM5.500.5v12M2 3.500h2M2 5.500h2M2 7.500h2" /></svg>
        </div>
        <div className={`${toolBtn} ml-[17px] w-[37px]`}>
          <svg width="22" height="12" viewBox="0 0 22 12" fill="#6d6d6d"><circle cx="3" cy="6" r="2.200" /><circle cx="9.500" cy="6" r="2.200" /><circle cx="16" cy="6" r="2.200" /><path d="M20 1h1v10h-1z" /></svg>
        </div>
        <div className={`${toolBtn} ml-[8px] w-[37px]`}>
          <svg width="17" height="17" viewBox="0 0 17 17"><path d="M5 0h7l5 5v7l-5 5H5l-5-5V5z" fill="#777" /><text x="8.500" y="11.200" fontSize="7.500" fontWeight="700" fill="#fff" textAnchor="middle" textLength="15" className="font-['Liberation_Sans']">ABP</text></svg>
        </div>
        <div className={`${toolBtn} relative ml-[8px] w-[283px]`}>
          <span className="pt-[2px] text-[11.7px] text-[#111]">localhost</span>
          <svg className="absolute right-[6px] top-[4px]" width="13" height="15" viewBox="0 0 13 15" fill="none" stroke="#6d6d6d" strokeWidth="1.100"><path d="M11.600 7.500a5 5 0 1 1-5-5" /><path d="M6 0l3.500 2.500L6 5z" fill="#6d6d6d" stroke="none" /></svg>
        </div>
        <div className={`${toolBtn} ml-[193px] w-[37px]`}>
          <svg width="13" height="16" viewBox="0 0 13 16" fill="none" stroke="#666" strokeWidth="1.100"><path d="M4 6H1.500v8.500h10V6H9M6.500 10V1.500M3.800 4L6.500 1.300L9.200 4" /></svg>
        </div>
        <div className={`${toolBtn} ml-[8px] w-[37px]`}>
          <svg width="13" height="13" viewBox="0 0 13 13" fill="none" stroke="#666" strokeWidth="1.100"><path d="M1 4h8v8H1zM4 4V1h8v8H9" /></svg>
        </div>
      </header>
      <nav className="flex h-[24px] shrink-0 border-y border-[#a9a7a9] font-[Inter] text-[11.2px] leading-[22px] text-[#222]">
        <div className="w-[424px] border-r border-[#a3a1a3] bg-[#bcbabc] text-center">GitHub</div>
        <div className="w-[402px] border-r border-[#a3a1a3] bg-[#d9d7d9] text-center">Site Map : 2019 DI Capital Region</div>
        <div className="flex flex-1 items-center justify-center bg-[#bcbabc]">
          <svg width="11" height="11" viewBox="0 0 11 11" stroke="#6a6a6a"><path d="M5.500 0v11M0 5.500h11" /></svg>
        </div>
      </nav>
      <div className="flex h-[33px] shrink-0 items-center pl-[8px] pt-[5px] font-['Liberation_Sans'] text-[16px] text-black">
        <span>Spotlight on :</span>
        <b className="ml-[14px] w-[75px]">0.88,0.28</b>
        <button className="mt-[3px] h-[21px] w-[42px] border border-black bg-[#efefef] font-[Inter] text-[11px] leading-none">Clear</button>
      </div>
      <div className="ml-[8px] flex h-[36px] w-[833px] shrink-0 items-center bg-[#153757] font-['DejaVu_Serif'] text-[13px] tracking-[0.09px] text-[#e8eef3] [-webkit-text-stroke:0.25px_#e8eef3]">
        <span className="ml-[63px] w-[266px] whitespace-pre">Level 1  Exhibit Halls</span>
        <span className="w-[251px] whitespace-pre">Level 2  Grand Ballrooms</span>
        <span className="whitespace-pre">Level 3  Meeting Rooms &amp; Terrace</span>
      </div>
      <FloorPlans />
      <div className="absolute left-0 top-[57px] h-[72px] w-[47px] border-b-[6px] border-r-[6px] border-[rgba(239,70,50,0.68)] bg-[rgba(255,255,90,0.214)] bg-clip-padding" />
    </section>
  );
}

/* ---------- spreadsheet window ---------- */

const rows: string[][] = [
  ["TempWorkingNam", "RoomID", "ActualName", "BuildingLeve", "MapX", "MapY"],
  ["IC Check In", "L1_EASTPF", "East Entrance Hallway", "Level 1", "0.3", "0.5"],
  ["Rising Stars Check", "L1_NORTH", "North Hallway", "Level 1", "0.25", "0.13"],
  ["Structure Weigh In", "L2_NORTH", "North Hallway", "Level 2", "0.56", "0.15"],
  ["EXTREME", "L3_TIMPAN", "TimPanogos Terrace", "Level 3", "0.88", "0.28"],
  ["TC Friends RS-T", "L1_EXHC", "Exhibit Hall C", "Level 1", "0.17", "0.28"],
  ["TC Friends RS-E", "L1_EXHB", "Exhibit Hall B", "Level 1", "0.17", "0.42"],
  ["TC Friends RS-X", "L1_EXHA", "Exhibit Hall A", "Level 1", "0.17", "0.57"],
  ["TC Inside EL ML", "L3_SOLCRK", "Soldier Creek Room", "Level 3", "0.73", "0.41"],
  ["TC Drop EL ML", "L3_BATCRK", "Battle Creek Room", "Level 3", "0.77", "0.39"],
  ["TC Drop EL ML 2", "L3_SILCRK", "Silver Creek Room", "Level 3", "0.8", "0.4"],
  ["TC Treasure EL ML", "L3_HOBCRK", "Hobble Creek Room", "Level 3", "0.83", "0.39"],
  ["TC Rm236 Change", "L3_BR", "Board Room", "Level 3", "0.94", "0.39"],
  ["TC Missing Test", "", "Cascade B", "Level 3", "0", "0"],
  ["TC Rm240 Change", "L3_CASB", "Cascade B", "Level 3", "0.89", "0.62"],
  ["TC Unlikely EL ML", "L2_BALLA", "Ballroom A", "Level 2", "0.48", "0.61"],
  ["TC NGC PE GYM M", "L2_BALLB", "Ballroom B", "Level 2", "0.48", "0.48"],
];

const cellStyles = [
  "tracking-[-0.17px] pl-[2px]",
  "tracking-[-0.5px] pl-[2px]",
  "pl-[2px] tracking-[0.05px]",
  "pl-[2px]",
  "pr-[2px]",
  "pr-[2px]",
  "pl-[2px]",
];

const grid = "grid grid-cols-[24px_93px_65px_111px_65px_65px_65px_65px]";

const Caret = ({ className = "" }: { className?: string }) => (
  <svg width="5" height="4" viewBox="0 0 5 4" className={`shrink-0 ${className}`}><path d="M0 0h5L2.500 4z" fill="#858585" /></svg>
);

function StyleIcon({ kind }: { kind: number }) {
  return (
    <svg width="17" height="16" viewBox="0 0 17 16" className="shrink-0">
      <path d="M.5 2.500h14v11H.5zM5 2.500v11M10 2.500v11M.5 6h14M.5 10h14" fill="#fafafa" stroke="#c2c6cb" />
      {kind === 0 ? (
        <><path d="M3 2h4v4H3zM3 10h8v3.500H3z" fill="#de7b7b" /><path d="M3 6h8v4H3z" fill="#e0797b" /><path d="M3 6h3v4H3z" fill="#7f9fd0" /></>
      ) : (
        <><path d="M1 3h13v3H1z" fill="#d7e4f2" /><path d="M16 2L9.500 10" stroke="#8a8a8a" strokeWidth="2" /><path d="M9 8.500q3 1 2.500 4q-2 3.500-7 2.500q2.500-1 2-3.500q.5-2.500 2.500-3z" fill="#6e9bd6" /></>
      )}
    </svg>
  );
}

function Spreadsheet() {
  return (
    <section className="flex h-full min-w-0 flex-1 flex-col overflow-hidden bg-white font-[Inter]">
      <div className="flex h-[24px] shrink-0 items-center bg-[#6f9a7f] text-white">
        <div className="ml-[13px] flex shrink-0 gap-[8px]">
          <i className="flex size-[12px] items-center justify-center rounded-full bg-[#dfe2df]"><i className="size-[4px] rounded-full bg-[#555]" /></i>
          <i className="size-[12px] rounded-full bg-[#dcdfdc]" />
          <i className="size-[12px] rounded-full bg-[#dcdfdc]" />
        </div>
        <i className="ml-[13px] h-[16px] w-px shrink-0 bg-[#628a71]" />
        <svg className="ml-[16px] shrink-0" width="16" height="14" viewBox="0 0 16 14" fill="none" stroke="#f0f6f1" strokeWidth="1.500"><path d="M1 1h14v12H1zM6 1v12M8.500 3.500h3l1.500 1.500v6H8.500z" /><path d="M2 4h2.500M2 7h2.500M2 10h2.500" /></svg>
        <svg className="ml-[16px] shrink-0" width="14" height="14" viewBox="0 0 14 14" fill="none" stroke="#f0f6f1" strokeWidth="1.500"><path d="M1 1h12v12H1zM3 1v5h8V1M4 13V9h6v4" /></svg>
        <svg className="ml-[16px] shrink-0" width="16" height="14" viewBox="0 0 16 14" fill="none" stroke="#f0f6f1" strokeWidth="2"><path d="M1.500 3v6h6M2 8.500Q5 2.500 10 3Q15 4 13.500 8Q12.500 11 9 12" /></svg>
        <svg className="ml-[8px] shrink-0" width="5" height="4" viewBox="0 0 5 4"><path d="M0 0h5L2.500 4z" fill="#fff" /></svg>
        <svg className="ml-[14px] shrink-0 opacity-40" width="14" height="14" viewBox="0 0 14 14" fill="none" stroke="#f0f6f1" strokeWidth="1.800"><path d="M3.500 3.500A5 5 0 1 0 11.500 5M7 6.500V1.500h5" /></svg>
        <svg className="ml-[20px] shrink-0" width="9" height="8" viewBox="0 0 9 8" fill="#fff"><path d="M0 0h9v1.500H0zM1 3.500h7L4.500 7.500z" /></svg>
        <svg className="ml-[30px] shrink-0" width="14" height="15" viewBox="0 0 14 15"><path d="M4 0h6l4 4v11H4z" fill="#f5f8f5" /><path d="M10 0v4h4" stroke="#7b9f88" fill="none" /><path d="M0 4h7v7H0z" fill="#cfdcd2" /><path d="M2 5.500l3.500 4M5.500 5.500L2 9.500" stroke="#5c8a6c" /></svg>
        <span className="ml-[4px] w-[113px] shrink-0 whitespace-nowrap pt-[2px] text-[12.6px] font-medium">room_assignments</span>
        <div className="ml-[15px] flex h-[20px] w-[110px] shrink-0 items-center rounded-[3px] bg-[#5a7f68] pl-[5px]">
          <svg width="19" height="12" viewBox="0 0 19 12" fill="none" stroke="#fff" strokeWidth="1.300" className="shrink-0"><circle cx="5" cy="4.800" r="3.800" /><path d="M7.700 7.500L11 11M13.500 5l2.200 2.200L18 5" /></svg>
          <span className="ml-[4px] whitespace-nowrap text-[12px] tracking-[0.2px] text-[#a7bdae]">Search Sheet</span>
        </div>
      </div>
      <nav className="flex h-[24px] shrink-0 items-end bg-[#6f9a7f] text-[12.2px] font-medium leading-[22px] text-[#edf3ee]">
        <span className="ml-[11px] h-[22px] w-[59px] bg-[#f6f6f6] text-center text-[#6c9a7d]">Home</span>
        <span className="ml-[15px] w-[63px]">Insert</span>
        <span className="w-[103px]">Page Layout</span>
        <span className="w-[84px]">Formulas</span>
        <span className="w-[55px]">Data</span>
        <span className="w-[70px]">Review</span>
        <span>View</span>
      </nav>
      <div className="flex h-[71px] shrink-0 border-b border-[#cfcfcf] bg-[#f5f5f5] text-[10.7px] text-[#454545]">
        <div className="flex w-[106px] shrink-0 pl-[13px]">
          <div className="w-[50px] shrink-0 pt-[7px]">
            <div className="flex items-center">
              <svg className="ml-[1px] shrink-0" width="26" height="30" viewBox="0 0 26 30"><rect x="1" y="4" width="22" height="25" rx="2" fill="#dcb777" /><path d="M6 7q0-4 4-4q2-5 4 0q4 0 4 4z" fill="#777" /><path d="M10 12h9l6 6v11H10z" fill="#fff" stroke="#bbb" /><path d="M19 12v6h6" fill="none" stroke="#bbb" /></svg>
              <Caret className="ml-[8px]" />
            </div>
            <div className="mt-[4px] w-[37px] text-center">Paste</div>
          </div>
          <div className="flex flex-col items-start gap-[5px] pl-[3px] pt-[5px]">
            <svg width="15" height="16" viewBox="0 0 15 16" fill="none"><path d="M3 0l6.500 10M12 0L5.500 10" stroke="#444" strokeWidth="1.700" /><circle cx="3.500" cy="12.500" r="2.500" stroke="#7596c8" strokeWidth="1.200" /><circle cx="11.500" cy="12.500" r="2.500" stroke="#7596c8" strokeWidth="1.200" /></svg>
            <div className="flex items-center"><svg width="16" height="17" viewBox="0 0 16 17" fill="#fafafa" stroke="#b5b5b5"><path d="M1 5h5l3 3v7H1z" /><path d="M6 1h5l3.500 3.500v8H6z" /></svg><Caret className="ml-[6px]" /></div>
            <svg width="17" height="15" viewBox="0 0 17 15"><path d="M16 1L10 7" stroke="#aaa" strokeWidth="3" /><path d="M7 3l6 6l-3 2l-5-5z" fill="#bcbcbc" /><path d="M4 6l6 6l-4 3L0 8z" fill="#83a6cf" /></svg>
          </div>
        </div>
        <i className="my-[5px] w-px shrink-0 bg-[#dcdcdc]" />
        <div className="flex w-[63px] shrink-0 flex-col items-center pt-[9px]">
          <div className="flex h-[27px] items-center"><svg width="28" height="26" viewBox="0 0 28 26" fill="none"><path d="M1.500 22L10 2.500L16 18M5 15h10" stroke="#b9b9b9" strokeWidth="3.600" /><g fill="#777"><circle cx="11" cy="22" r="2" /><circle cx="18" cy="22" r="2" /><circle cx="25" cy="22" r="2" /></g></svg><Caret className="ml-[4px]" /></div>
          <div className="mt-[5px]">Font</div>
        </div>
        <i className="my-[5px] w-px shrink-0 bg-[#dcdcdc]" />
        <div className="flex w-[69px] shrink-0 flex-col items-center pt-[9px]">
          <div className="flex h-[27px] items-center"><svg width="27" height="22" viewBox="0 0 27 22" stroke="#6e6e6e" strokeWidth="1.500"><path d="M3 1.500h22M7 7.500h14M1 13.500h26M5 19.500h18" /></svg><Caret className="ml-[6px]" /></div>
          <div className="mt-[5px]">Alignment</div>
        </div>
        <i className="my-[5px] w-px shrink-0 bg-[#dcdcdc]" />
        <div className="flex w-[64px] shrink-0 flex-col items-center pt-[9px]">
          <div className="flex h-[27px] items-center"><span className="font-['Open_Sans'] text-[31px] leading-none text-[#6e6e6e]">%</span><Caret className="ml-[6px]" /></div>
          <div className="mt-[5px]">Number</div>
        </div>
        <i className="my-[5px] w-px shrink-0 bg-[#dcdcdc]" />
        <div className="flex w-[171px] shrink-0 flex-col gap-[7px] pl-[14px] pt-[4px] text-[10.8px]">
          {["Conditional Formatting", "Format as Table", "Cell Styles"].map((t, i) => (
            <div key={t} className="flex h-[16px] items-center whitespace-nowrap"><StyleIcon kind={i} /><span className="ml-[4px]">{t}</span><Caret className="ml-[4px]" /></div>
          ))}
        </div>
        <i className="my-[5px] w-px shrink-0 bg-[#dcdcdc]" />
        <div className="w-[60px] shrink-0 pl-[12px] pt-[7px]">
          <svg width="34" height="30" viewBox="0 0 34 30"><path d="M1 1v7M25 1v7M5 4.500h16M8 2L5 4.500L8 7M18 2l3 2.500L18 7" stroke="#7ba0d0" strokeWidth="1.500" fill="none" /><path d="M1 10h33v18H1zM10 10v18M19 10v18M1 16h33M1 23h33" stroke="#c9c9c9" fill="#fff" /><path d="M7 14h8v8H7z" fill="#5e93d2" /></svg>
          <div className="ml-[7px] mt-[4px]">Cells</div>
        </div>
      </div>
      <div className="flex h-[26px] shrink-0 items-center border-b border-[#bdbdbd] bg-white">
        <div className="flex h-full w-[86px] shrink-0 items-center border-r border-[#d0d0d0] pl-[10px] pt-[1px] font-[Lato] text-[12.5px] text-[#4a4a4a]">
          C5
          <svg className="ml-auto mr-[5px]" width="7" height="16" viewBox="0 0 7 16" fill="#8a8a8a"><path d="M0 5.500h7L3.500 0zM0 10.500h7L3.500 16z" /></svg>
        </div>
        <svg className="ml-[13px] shrink-0" width="43" height="12" viewBox="0 0 43 12" fill="none" stroke="#c4c4c4" strokeWidth="1.800"><path d="M1 1l10 10M11 1L1 11M30 6l4.500 4.500L43 1" /></svg>
        <span className="ml-[17px] font-['Liberation_Serif'] text-[17px] italic leading-none text-[#222]">fx</span>
        <i className="ml-[8px] h-[16px] w-px bg-[#ddd]" />
        <span className="ml-[7px] whitespace-nowrap font-[Lato] text-[12.9px] text-black">TimPanogos Terrace</span>
      </div>
      <div className="h-[4px] shrink-0 border-b border-[#c4c4c4] bg-[#ededed]" />
      <div className={`${grid} h-[21px] w-[553px] shrink-0 font-[Lato] text-[11.5px] text-[#444]`}>
        <div className="flex items-end justify-end border-b border-r border-[#bcbcbc] bg-[#f3f3f3] p-[2px]"><svg width="15" height="15" viewBox="0 0 15 15"><path d="M15 0v15H0z" fill="#d2d2d2" /></svg></div>
        {["A", "B", "C", "D", "E", "F", ""].map((c) => (
          <div key={c} className={c === "C" ? "border-b-2 border-r border-b-[#4a7c59] border-r-[#d0d0d0] bg-[#e4e4e4] text-center font-bold leading-[20px] text-[#2e6b42]" : "border-b border-r border-b-[#bcbcbc] border-r-[#d6d6d6] bg-[#f7f7f7] text-center leading-[20px]"}>{c}</div>
        ))}
      </div>
      <div className="w-[553px] shrink-0 font-[Lato] text-[11px] leading-[16px] text-[#111]">
        {Array.from({ length: 30 }, (_, r) => (
          <div key={r} className={`${grid} h-[16px]`}>
            <div className={r === 4 ? "border-b border-r-2 border-b-[#cfcfcf] border-r-[#4a7c59] bg-[#e2e2e2] text-center text-[12px] font-bold text-[#2e6b42]" : "border-b border-r border-b-[#dadada] border-r-[#bcbcbc] bg-[#f3f3f3] text-center text-[11.5px] text-[#444]"}>{r + 1}</div>
            {Array.from({ length: 7 }, (_, c) => (
              <div key={c} className="relative h-[16px] border-b border-r border-[#d4d4d4]">
                <div className={`h-[15px] whitespace-nowrap ${cellStyles[c]} ${r > 0 && c > 3 ? "text-right" : ""}`}>{rows[r]?.[c] ?? ""}</div>
                {r === 4 && c === 2 && (
                  <><div className="absolute -left-[1px] -right-[1px] -top-[2px] bottom-[-1px] border-2 border-[#447653]" /><i className="absolute -bottom-[3px] -right-[3px] size-[6px] border border-white bg-[#447653]" /></>
                )}
              </div>
            ))}
          </div>
        ))}
      </div>
    </section>
  );
}

export default function App() {
  return (
    <main className="flex h-[645px] w-[1370px] overflow-hidden bg-white">
      <Browser />
      <div className="flex h-full w-[3px] shrink-0 flex-col bg-black"><i className="h-[18px] bg-[#c9c7c9]" /></div>
      <Spreadsheet />
    </main>
  );
}
